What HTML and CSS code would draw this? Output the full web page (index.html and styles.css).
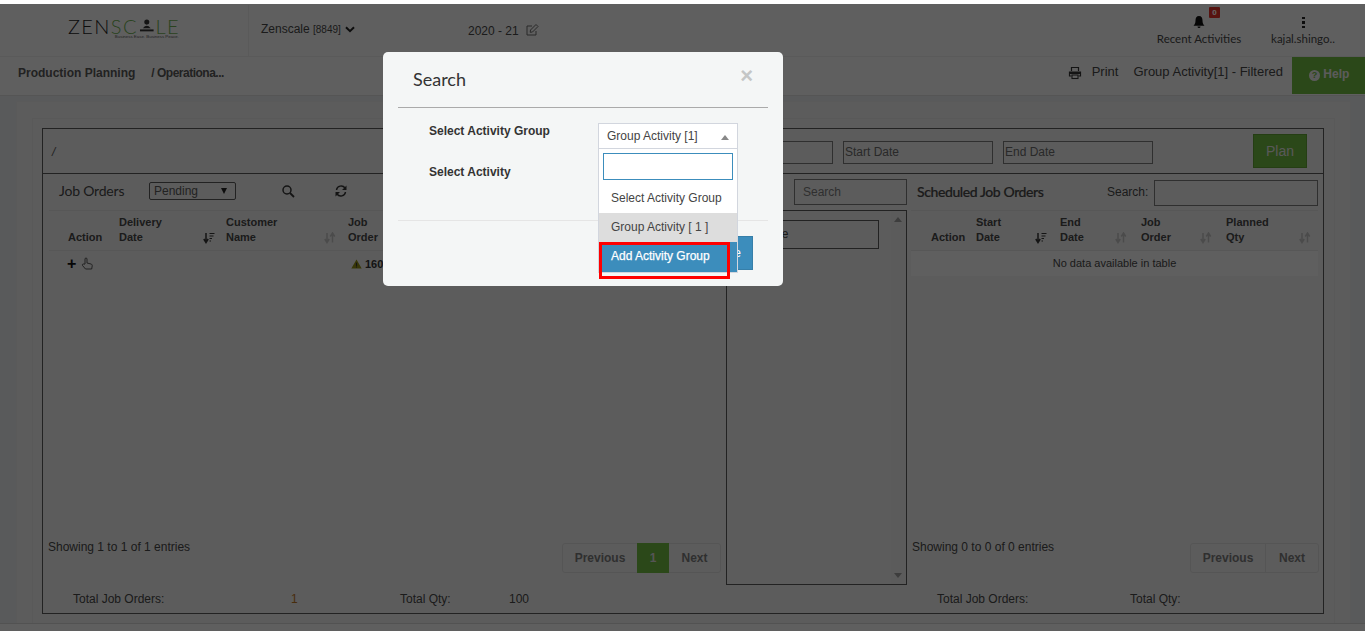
FILE: index.html
```html
<!DOCTYPE html>
<html lang="en">
<head>
<meta charset="utf-8">
<title>Production Planning</title>
<link rel="stylesheet" href="styles.css">
</head>
<body>
<div class="page">
  <header class="topbar">
    <div class="logo-cell">
      <div class="logo">
        <div class="logo-word"><span class="ink">ZEN</span><span class="leaf">SC</span><svg class="logo-a" viewBox="0 0 16 14"><circle cx="8" cy="3" r="2.6" fill="#333"/><path d="M4 9.2 Q8 4.5 12 9.2Z" fill="#333"/><rect x="1" y="10.5" width="14" height="2" fill="#333"/></svg><span class="leaf">LE</span></div>
        <div class="logo-tag">Business Ease. Business Peace.</div>
      </div>
    </div>
    <div class="company">Zenscale <small>[8849]</small>
      <svg class="chev" viewBox="0 0 10 7"><path d="M1 1.2 5 5.2 9 1.2" fill="none" stroke="#222" stroke-width="2"/></svg>
    </div>
    <div class="year">2020 - 21
      <svg class="edit" viewBox="0 0 14 14"><path d="M11 8v4H2V3h5" fill="none" stroke="#666" stroke-width="1"/><path d="M5.500 7 11 1.500 13 3.500 7.500 9 5.200 9.300Z" fill="none" stroke="#666" stroke-width="1"/></svg>
    </div>
    <div class="top-right">
      <div class="top-item recent">
        <div class="top-icon">
          <svg class="bell" viewBox="0 0 14 14"><path d="M7 1C4.500 1 3.500 3 3.500 5.500 3.500 8 2.800 9.500 1.500 10.700H12.500C11.200 9.500 10.500 8 10.500 5.500 10.500 3 9.500 1 7 1Z" fill="#111"/><path d="M5.500 11.500a1.500 1.500 0 0 0 3 0Z" fill="#111"/></svg>
          <span class="badge">0</span>
        </div>
        <div class="top-label">Recent Activities</div>
      </div>
      <div class="top-item user">
        <div class="top-icon"><span class="kebab"><i></i><i></i><i></i></span></div>
        <div class="top-label">kajal.shingo..</div>
      </div>
    </div>
  </header>

  <div class="subbar">
    <div class="crumbs"><span>Production Planning</span><span class="crumb-small">/ Operationa...</span></div>
    <div class="sub-right">
      <svg class="printer" viewBox="0 0 14 14"><path d="M3.500 5V1.500h7V5M3.500 10H1.500V6h11v4h-2" fill="none" stroke="#333" stroke-width="1.200"/><rect x="1.500" y="6" width="11" height="2" fill="#333"/><rect x="4" y="9" width="6" height="3.500" fill="none" stroke="#333" stroke-width="1.100"/></svg>
      <span class="print-label">Print</span>
      <span class="filter-label">Group Activity[1] - Filtered</span>
      <div class="help"><span class="help-q">?</span> Help</div>
    </div>
  </div>

  <main class="stage">
    <div class="card">
      <div class="card-inner">
        <section class="panel">
          <div class="panel-top">
            <span class="slash">/</span>
            <div class="filters">
              <span class="date-box first"></span>
              <span class="date-box">Start Date</span>
              <span class="date-box">End Date</span>
              <button class="plan">Plan</button>
            </div>
          </div>

          <div class="columns">
            <div class="col-left">
              <div class="col-head">
                <span class="col-title">Job Orders</span>
                <span class="pending">Pending<b class="pending-arrow"></b></span>
                <svg class="tool search-tool" viewBox="0 0 14 14"><circle cx="6" cy="6" r="4" fill="none" stroke="#333" stroke-width="1.500"/><path d="m9 9 4 4" stroke="#333" stroke-width="1.800"/></svg>
                <svg class="tool refresh-tool" viewBox="0 0 14 14"><path d="M2.500 6A4.700 4.700 0 0 1 11 4M11.500 8A4.700 4.700 0 0 1 3 10" fill="none" stroke="#333" stroke-width="1.500"/><path d="M12.500 1.500V6H8ZM1.500 12.500V8H6Z" fill="#333"/></svg>
              </div>
              <div class="thead left-head">
                <span class="th th-action">Action</span>
                <span class="th th-delivery">Delivery<br>Date<svg class="sort on" viewBox="0 0 12 12"><use href="#sort-on"/></svg></span>
                <span class="th th-customer">Customer<br>Name<svg class="sort" viewBox="0 0 12 12"><use href="#sort-glyph"/></svg></span>
                <span class="th th-job">Job<br>Order</span>
              </div>
              <div class="row-left">
                <span class="plus">+</span>
                <svg class="hand" viewBox="0 0 12 14"><path d="M4 7V2a1 1 0 0 1 2 0v4l4 1c1 .3 1.300 1 1.200 2l-.5 3H4.500L1.500 8.500c-.6-1 .5-2 1.500-1.300Z" fill="none" stroke="#333" stroke-width=".8"/></svg>
                <svg class="warn" viewBox="0 0 12 11"><path d="M6 .5 11.700 10.500H.3Z" fill="#8c8a14"/><rect x="5.400" y="4" width="1.200" height="3.600" fill="#333"/><rect x="5.400" y="8.200" width="1.200" height="1.200" fill="#333"/></svg>
                <b class="job-no">160</b>
              </div>
              <div class="foot-left">
                <span class="info">Showing 1 to 1 of 1 entries</span>
                <div class="pager">
                  <span class="pg pg-prev">Previous</span><span class="pg pg-cur">1</span><span class="pg pg-next">Next</span>
                </div>
              </div>
              <div class="totals left-totals">
                <span class="t1">Total Job Orders:</span><span class="t2">1</span><span class="t3">Total Qty:</span><span>100</span>
              </div>
            </div>

            <div class="col-mid">
              <div class="mid-search">Search</div>
              <div class="mid-box">
                <div class="mid-list"><div class="mid-item">Machine</div></div>
                <div class="mid-scroll"><b class="tri up"></b><b class="tri down"></b></div>
              </div>
            </div>

            <div class="col-right">
              <div class="col-head right-top">
                <span class="col-title strong">Scheduled Job Orders</span>
                <span class="search-label">Search:</span>
                <span class="search-input"></span>
              </div>
              <div class="thead right-head">
                <span class="th r-action">Action</span>
                <span class="th r-start">Start<br>Date<svg class="sort on" viewBox="0 0 12 12"><use href="#sort-on"/></svg></span>
                <span class="th r-end">End<br>Date<svg class="sort" viewBox="0 0 12 12"><use href="#sort-glyph"/></svg></span>
                <span class="th r-job">Job<br>Order<svg class="sort" viewBox="0 0 12 12"><use href="#sort-glyph"/></svg></span>
                <span class="th r-qty">Planned<br>Qty<svg class="sort" viewBox="0 0 12 12"><use href="#sort-glyph"/></svg></span>
              </div>
              <div class="no-data">No data available in table</div>
              <div class="foot-right">
                <span class="info">Showing 0 to 0 of 0 entries</span>
                <div class="pager">
                  <span class="pg pg-prev2">Previous</span><span class="pg pg-next2">Next</span>
                </div>
              </div>
              <div class="totals right-totals">
                <span class="t4">Total Job Orders:</span><span>Total Qty:</span>
              </div>
            </div>
          </div>
        </section>
      </div>
    </div>
  </main>
  <div class="pagefoot"></div>
</div>

<svg class="defs" width="0" height="0" aria-hidden="true">
  <symbol id="sort-glyph" viewBox="0 0 12 12"><path d="M3 1v8M.8 7 3 10.500 5.200 7" fill="none" stroke="currentColor" stroke-width="1.500"/><path d="M8.500 10.500V2M6.300 4.500 8.500 1l2.200 3.500" fill="none" stroke="currentColor" stroke-width="1.500"/></symbol>
  <symbol id="sort-on" viewBox="0 0 12 12"><path d="M3 1v8M.8 7 3 10.500 5.200 7" fill="none" stroke="currentColor" stroke-width="1.500"/><path d="M6.500 1.500h5M6.500 4h4M6.500 6.500h2.500M6.500 9h1.500" fill="none" stroke="currentColor" stroke-width="1.200"/></symbol>
</svg>

<div class="backdrop"></div>

<div class="modal">
  <div class="modal-head">
    <h2>Search</h2>
    <span class="close">×</span>
  </div>
  <div class="modal-body">
    <label class="m-label">Select Activity Group</label>
    <div class="select2">
      <div class="select2-value">Group Activity [1]<b class="select2-arrow"></b></div>
      <div class="select2-menu">
        <div class="select2-search"><span class="select2-input"></span></div>
        <div class="opt">Select Activity Group</div>
        <div class="opt opt-sel">Group Activity [ 1 ]</div>
        <div class="opt opt-hi">Add Activity Group</div>
      </div>
      <div class="callout"></div>
    </div>
    <label class="m-label second">Select Activity</label>
  </div>
  <div class="modal-foot">
    <button class="m-btn">Close</button>
  </div>
</div>
</body>
</html>
```

FILE: styles.css
```css
* { box-sizing: border-box; }
html, body { margin: 0; padding: 0; }
body {
  height: 631px;
  overflow: hidden;
  background: #fff;
  font-family: "Liberation Sans", Arial, sans-serif;
  font-size: 12px;
  color: #333;
  position: relative;
}
.page { padding-top: 4px; height: 631px; display: flex; flex-direction: column; }
.defs { position: absolute; }

/* top bar */
.topbar {
  height: 53px; flex: none;
  display: flex; align-items: stretch;
  background: #eee;
  border-top: 1px solid #eee;
  border-bottom: 1px solid #e2e2e2;
}
.logo-cell {
  width: 249px; flex: none;
  border-right: 1px solid #e2e2e2;
  padding: 13px 0 0 68px;
}
.logo { width: 112px; }
.logo-word {
  display: flex; align-items: center;
  font-family: Lato, sans-serif; font-weight: 300; font-size: 20px;
  line-height: 16px; letter-spacing: 1.4px;
}
.ink { color: #222; }
.leaf { color: #6aa84f; }
.logo-a { width: 16px; height: 14px; margin: 0 1px; }
.logo-tag { font-size: 4.4px; line-height: 5px; color: #555; text-align: right; margin: 0 1px 0 0; }
.company { padding: 17px 0 0 12px; width: 207px; flex: none; font-size: 12px; color: #444; line-height: 14px; }
.company small { font-size: 10px; }
.chev { width: 10px; height: 7px; display: inline-block; margin-left: 1px; vertical-align: 0; }
.year { padding: 18px 0 0 12px; font-size: 12px; color: #444; line-height: 14px; white-space: nowrap; }
.edit { width: 14px; height: 14px; margin-left: 3px; vertical-align: -2px; }
.top-right { margin-left: auto; display: flex; }
.top-item { display: flex; flex-direction: column; align-items: center; }
.recent { width: 84px; margin-right: 17px; }
.user { width: 90px; margin-right: 17px; }
.top-icon { height: 27px; position: relative; display: flex; align-items: flex-end; justify-content: center; padding-bottom: 3px; }
.bell { width: 14px; height: 14px; display: block; }
.badge {
  position: absolute; left: 17px; top: 2px;
  width: 11px; height: 11px;
  background: #d9302a; color: #fff; font-size: 8px; font-weight: 700;
  text-align: center; line-height: 11px; border-radius: 1px;
}
.kebab { display: flex; flex-direction: column; gap: 2px; margin-bottom: 1px; }
.kebab i { width: 3px; height: 2.500px; background: #222; display: block; }
.top-label { font-family: Lato, sans-serif; font-size: 11.5px; line-height: 14px; color: #444; white-space: nowrap; }

/* sub bar */
.subbar {
  height: 38px; flex: none;
  display: flex; align-items: flex-start;
  background: #eee;
}
.crumbs { display: flex; gap: 16px; padding: 9px 0 0 18px; font-weight: 700; font-size: 12px; line-height: 14px; color: #555; }
.crumb-small { letter-spacing: -.5px; }
.sub-right { margin-left: auto; display: flex; align-items: flex-start; }
.printer { width: 14px; height: 14px; margin: 9px 10px 0 0; }
.print-label { padding-top: 8px; margin-right: 15px; font-size: 13px; line-height: 14px; color: #444; }
.filter-label { padding-top: 8px; margin-right: 9px; font-size: 13px; line-height: 14px; color: #444; }
.help {
  width: 73px; height: 37px; background: #6db33f; color: #e4e4e4; font-weight: 700;
  padding: 10px 0 0 17px; line-height: 14px; white-space: nowrap;
}
.help-q {
  display: inline-block; width: 11px; height: 11px; border-radius: 50%;
  background: #e4e4e4; color: #6db33f; font-size: 9px; line-height: 11px; text-align: center; vertical-align: 0;
}

/* stage */
.stage { flex: 1; min-height: 0; background: #dfe1e4; padding: 5px 14px 0 16px; border-top: 1px solid #d5d5d5; }
.card { height: 100%; background: #e6e6e6; border: 1px solid #e2e2e2; border-bottom: 0; padding: 16px 15px 0; border-radius: 2px 2px 0 0; }
.card-inner { height: 100%; border: 1px solid #dedede; border-bottom: 0; padding: 9px 10px 0 9px; }
.panel { width: 1282px; height: 486px; border: 1px solid #555; display: flex; flex-direction: column; }

.panel-top { height: 45px; flex: none; border-bottom: 1px solid #555; display: flex; position: relative; }
.slash { font-style: italic; padding: 16px 0 0 9px; line-height: 14px; color: #555; }
.filters { margin-left: auto; display: flex; align-items: flex-start; padding: 12px 16px 0 0; }
.date-box {
  width: 150px; height: 23px; margin-right: 10px;
  border: 1px solid #777; padding-left: 1px; font-size: 12px; line-height: 21px; color: #666;
}
.date-box.first { width: 120px; }
.plan {
  width: 54px; height: 34px; margin: -7px 0 0 90px; border: 1px solid #5d9b34;
  background: #6db33f; color: #ddd; font: 14px "Liberation Sans", sans-serif; padding: 0;
}

.columns { flex: 1; min-height: 0; display: flex; }
.col-left { width: 683px; flex: none; display: flex; flex-direction: column; }
.col-mid { width: 181px; flex: none; display: flex; flex-direction: column; }
.col-right { width: 416px; flex: none; display: flex; flex-direction: column; }

.col-head { height: 37px; flex: none; display: flex; align-items: center; position: relative; padding-bottom: 2px; }
.col-left .col-head { padding-left: 10px; margin-left: 6px; border-bottom: 1px solid #dadada; }
.col-title { font-family: Lato, sans-serif; font-size: 14px; color: #444; width: 73px; margin-top: -1px; white-space: nowrap; letter-spacing: -.2px; }
.col-title.strong { width: 190px; font-weight: 500; letter-spacing: -.4px; -webkit-text-stroke: .2px #444; }
.pending {
  width: 87px; height: 18px; margin-left: 17px; border: 1px solid #555; border-radius: 2px;
  padding-left: 4px; line-height: 16px; color: #555; position: relative;
}
.pending-arrow {
  position: absolute; right: 8px; top: 5px;
  border-left: 3.500px solid transparent; border-right: 3.500px solid transparent; border-top: 6px solid #222;
}
.tool { width: 14px; height: 14px; }
.search-tool { margin-left: 45px; }
.refresh-tool { margin-left: 39px; }

.thead { height: 40px; flex: none; display: flex; position: relative; font-weight: 700; font-size: 11px; border-bottom: 1px solid #dadada; }
.left-head { margin-left: 6px; }
.th { display: block; padding-top: 4px; line-height: 15px; color: #444; position: relative; align-self: stretch; }
.th-action { width: 70px; padding: 19px 0 0 19px; }
.th-delivery { width: 107px; }
.th-customer { width: 122px; }
.th-job { width: 60px; }
.sort { position: absolute; width: 12px; height: 12px; right: 15px; bottom: 6px; color: #bbb; }
.sort.on { color: #333; }
.th-delivery .sort { right: 11px; }
.th-customer .sort { right: 12px; }

.row-left { height: 25px; flex: none; display: flex; align-items: center; padding-left: 24px; }
.plus { width: 14px; font-weight: 700; font-size: 16px; color: #111; line-height: 14px; }
.hand { width: 12px; height: 14px; }
.warn { width: 11px; height: 10px; margin-left: 258px; }
.job-no { margin-left: 3px; font-size: 11px; color: #333; }

.foot-left { flex: 1; min-height: 0; display: flex; justify-content: space-between; align-items: flex-end; padding: 0 5px 0 5px; }
.foot-right { flex: 1; min-height: 0; display: flex; justify-content: space-between; align-items: flex-end; padding: 0 4px 0 5px; }
.info { align-self: flex-end; padding-bottom: 19px; line-height: 14px; color: #444; }
.pager { display: flex; height: 30px; border: 1px solid #d4d4d4; border-radius: 3px; font-weight: 700; color: #777; }
.pg { display: block; line-height: 28px; text-align: center; }
.pg-prev { width: 74px; }
.pg-cur { width: 32px; height: 30px; margin-top: -1px; line-height: 30px; background: #6db33f; color: #d4d4d4; }
.pg-next { width: 51px; }
.pg-prev2 { width: 75px; border-right: 1px solid #d4d4d4; }
.pg-next2 { width: 52px; }

.totals { height: 40px; flex: none; display: flex; align-items: flex-start; padding-top: 19px; line-height: 14px; color: #444; }
.left-totals { padding-left: 30px; }
.t1 { width: 218px; }
.t2 { width: 109px; color: #b5701f; }
.t3 { width: 109px; }
.right-totals { padding-left: 30px; }
.t4 { width: 193px; }

.mid-search {
  height: 26px; margin: 5px 0 5px 68px; width: 113px;
  border: 1px solid #777; padding-left: 8px; line-height: 24px; color: #777;
}
.mid-box {
  height: 375px; border: 1px solid #555; display: flex;
}
.mid-list { flex: 1; padding: 9px 12px 0 10px; overflow: hidden; }
.mid-item { height: 29px; border: 1px solid #555; line-height: 27px; padding-left: 5px; white-space: nowrap; color: #444; }
.mid-scroll { width: 15px; flex: none; background: #e4e4e4; position: relative; }
.tri { position: absolute; left: 3px; border-left: 4.500px solid transparent; border-right: 4.500px solid transparent; }
.tri.up { top: 6px; border-bottom: 5px solid #999; }
.tri.down { bottom: 6px; border-top: 5px solid #999; }

.right-top { padding-left: 10px; }
.search-label { color: #444; width: 47px; }
.search-input { width: 164px; height: 26px; margin-top: 2px; border: 1px solid #777; }
.right-head { margin-left: 4px; margin-right: 5px; border-top: 1px solid #dadada; height: 41px; margin-top: -1px; }
.r-action { width: 65px; padding: 19px 0 0 20px; }
.r-start { width: 84px; }
.r-end { width: 81px; }
.r-job { width: 85px; }
.r-qty { width: 92px; }
.r-start .sort { right: 13px; }
.r-end .sort { right: 14px; }
.r-job .sort { right: 14px; }
.r-qty .sort { right: 7px; }
.no-data {
  height: 25px; flex: none; margin: 0 5px 0 4px; background: #eeeeee;
  text-align: center; font-size: 11px; line-height: 25px; color: #444;
}

.pagefoot { height: 8px; flex: none; background: #eee; border-top: 1px solid #ccc; }

/* overlay */
.backdrop { position: absolute; inset: 4px 0 0 0; background: rgba(0, 0, 0, .6); }

.modal {
  position: absolute; left: 383px; top: 52px; width: 400px; height: 234px;
  background: #f4f6f6; border-radius: 5px; padding: 0 15px;
  display: flex; flex-direction: column;
}
.modal-head { height: 56px; flex: none; border-bottom: 1px solid #aaa; position: relative; padding: 16px 0 0 15px; }
.modal-head h2 { margin: 0; font-family: Lato, sans-serif; font-weight: 400; font-size: 18px; line-height: 22px; color: #333; }
.close { position: absolute; right: 15px; top: 13px; font-size: 22px; font-weight: 700; line-height: 22px; color: #c4c6c6; }
.modal-body { height: 113px; flex: none; position: relative; padding: 16px 0 0 31px; border-bottom: 1px solid #e5e5e5; }
.m-label { display: block; font-weight: 700; line-height: 14px; color: #333; }
.m-label.second { margin-top: 27px; }
.select2 { position: absolute; left: 200px; top: 15px; width: 140px; z-index: 2; }
.select2-value {
  height: 26px; background: #fff; border: 1px solid #d2d6de; padding-left: 8px;
  line-height: 24px; color: #444; position: relative;
}
.select2-arrow {
  position: absolute; right: 8px; top: 11px;
  border-left: 4.500px solid transparent; border-right: 4.500px solid transparent; border-bottom: 5px solid #888;
}
.select2-menu { background: #fff; border: 1px solid #d2d6de; border-top: 0; height: 124px; }
.select2-search { padding: 4px 4px 0; height: 32px; }
.select2-input { display: block; height: 27px; border: 1px solid #3c8dbc; }
.opt { height: 29px; padding-left: 12px; line-height: 29px; color: #444; }
.opt:nth-child(2) { height: 32px; line-height: 34px; }
.opt-sel { background: #ddd; }
.opt-hi { background: #3c8dbc; color: #fff; -webkit-text-stroke: .25px #fff; line-height: 29px; height: 30px; }
.callout { position: absolute; left: 1px; top: 119px; width: 131px; height: 37px; border: 3px solid #f00; }
.modal-foot { flex: 1; position: relative; display: flex; justify-content: flex-end; padding: 15px 15px 0 0; }
.m-btn {
  width: 60px; height: 34px; background: #3c8dbc; border: 1px solid #367fa9; color: #fff;
  font: 12px "Liberation Sans", sans-serif; padding: 0 0 0 5px; text-align: center;
}
```
